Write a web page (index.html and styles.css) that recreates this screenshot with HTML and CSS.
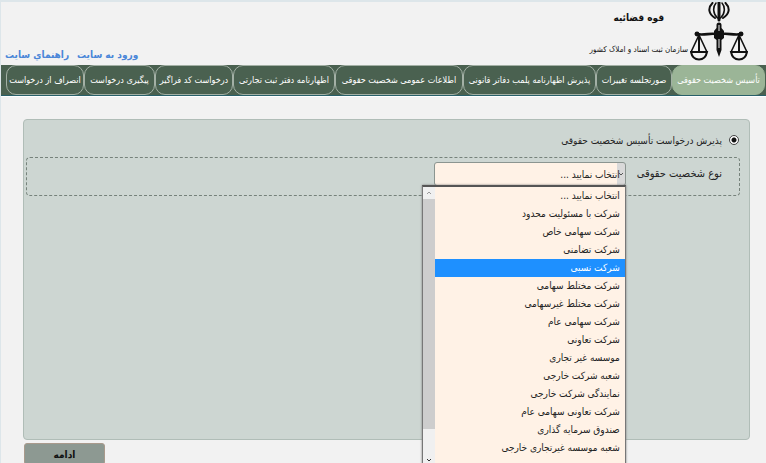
FILE: index.html
```
<!DOCTYPE html>
<html lang="fa" dir="rtl">
  <head>
    <meta charset="UTF-8" />
    <meta name="viewport" content="width=device-width, initial-scale=1.0" />
    <title>سازمان ثبت اسناد و املاک کشور</title>
    <link rel="stylesheet" href="styles.css">
  </head>
  <body>
    <header class="header">
      <div class="brand">
        <svg class="emblem" viewBox="0 2 58 60" width="58" height="60" aria-hidden="true">
          <g fill="none" stroke="#111" stroke-linecap="round">
            <path d="M22.500 3C17.500 8 18.500 14 25 18M35.500 3C40.500 8 39.500 14 33 18" stroke-width="2" />
            <path d="M26 3C22.500 7 23 14 27.500 18M32 3C35.500 7 35 14 30.500 18" stroke-width="1.600" />
            <path d="M29 2V20" stroke-width="3" />
            <path d="M6 34C14 35.500 20 33 26 34H32C38 33 44 35.500 52 34" stroke-width="2.600" />
            <path d="M9 34V52M49 34V52" stroke-width="2" />
            <path d="M9 35L1.500 51M9 35L16.500 51M49 35L41.500 51M49 35L56.500 51" stroke-width="1.600" />
            <path d="M1 52H17C15 62 3 62 1 52ZM41 52H57C55 62 43 62 41 52Z" stroke-width="2" />
          </g>
          <path d="M26.500 28V25A2.500 2.500 0 0 1 31.500 25V28L34 31V38L31.500 40V50L29 57L26.500 50V40L24 38V31Z" fill="#111" />
          <path d="M29 25V31M29 39V48" stroke="#f2f2f2" stroke-width="1" />
          <circle cx="7" cy="34" r="2.400" fill="#111" />
          <circle cx="51" cy="34" r="2.400" fill="#111" />
        </svg>
        <div class="brand-text">
          <span class="brand-top">قوه قضائیه</span>
          <span class="brand-name">سازمان ثبت اسناد و املاک کشور</span>
        </div>
      </div>
      <div class="links">
        <a href="#">ورود به سایت</a>
        <a href="#">راهنماي سایت</a>
      </div>
    </header>

    <nav class="tabs">
      <a href="#" class="tab active">تأسیس شخصیت حقوقی</a>
      <a href="#" class="tab">صورتجلسه تغییرات</a>
      <a href="#" class="tab">پذیرش اظهارنامه پلمب دفاتر قانونی</a>
      <a href="#" class="tab">اطلاعات عمومی شخصیت حقوقی</a>
      <a href="#" class="tab">اظهارنامه دفتر ثبت تجارتی</a>
      <a href="#" class="tab">درخواست کد فراگیر</a>
      <a href="#" class="tab">پیگیری درخواست</a>
      <a href="#" class="tab">انصراف از درخواست</a>
    </nav>

    <form class="content">
      <div class="panel">
        <div class="choice">
          <input type="radio" id="request" name="request" class="radio" checked />
          <label for="request">پذیرش درخواست تأسیس شخصیت حقوقی</label>
        </div>
        <div class="field">
          <label for="type" class="field-label">نوع شخصیت حقوقی</label>
          <div class="dropdown">
            <select id="type" class="select">
              <option>انتخاب نمایید ...</option>
            </select>
            <svg class="arrow" viewBox="0 0 8 8" width="8" height="8" aria-hidden="true"><path d="M2 3L4 5L6 3" fill="none" stroke="#555" /></svg>
            <div class="menu">
              <ul class="options" role="listbox" aria-label="نوع شخصیت حقوقی">
                <li role="option">انتخاب نمایید ...</li>
                <li role="option">شرکت با مسئولیت محدود</li>
                <li role="option">شرکت سهامی خاص</li>
                <li role="option">شرکت تضامنی</li>
                <li role="option" class="selected" aria-selected="true">شرکت نسبی</li>
                <li role="option">شرکت مختلط سهامی</li>
                <li role="option">شرکت مختلط غیرسهامی</li>
                <li role="option">شرکت سهامی عام</li>
                <li role="option">شرکت تعاونی</li>
                <li role="option">موسسه غیر تجاری</li>
                <li role="option">شعبه شرکت خارجی</li>
                <li role="option">نمایندگی شرکت خارجی</li>
                <li role="option">شرکت تعاونی سهامی عام</li>
                <li role="option">صندوق سرمایه گذاری</li>
                <li role="option">شعبه موسسه غیرتجاری خارجی</li>
              </ul>
              <div class="scrollbar">
                <svg viewBox="0 0 12 12" width="12" height="12"><path d="M4 7L6 5L8 7" fill="none" stroke="#999" /></svg>
                <div class="thumb"></div>
                <svg viewBox="0 0 12 12" width="12" height="12"><path d="M4 5L6 7L8 5" fill="none" stroke="#333" /></svg>
              </div>
            </div>
          </div>
        </div>
      </div>
      <button type="button" class="next">ادامه</button>
    </form>
  </body>
</html>
```
FILE: styles.css
```
* {
  box-sizing: border-box;
}
html {
  overflow: hidden;
}
body {
  margin: 0;
  background: #f2f2f2;
  border-top: 2px solid #dde6ea;
  border-left: 1px solid #dde6ea;
  font-family: "DejaVu Sans Condensed", "DejaVu Sans", sans-serif;
  font-size: 10px;
  color: #222;
}
.header {
  display: flex;
  justify-content: space-between;
  align-items: flex-end;
  height: 63px;
  padding: 0 18px 0 4px;
}
.brand {
  display: flex;
  align-self: flex-start;
  gap: 2px;
}
.emblem {
  display: block;
}
.brand-text {
  display: flex;
  flex-direction: column;
  align-items: center;
  gap: 12px;
  padding-top: 6px;
  color: #111;
  line-height: 20px;
  white-space: nowrap;
}
.brand-top {
  font-size: 10px;
  font-weight: bold;
}
.brand-name {
  font-size: 8px;
}
.links {
  display: flex;
  gap: 8px;
}
.links a {
  color: #4a86d8;
  font-weight: bold;
  line-height: 20px;
  text-decoration: none;
}
.tabs {
  display: grid;
  grid-template-columns: 93fr 76fr 133fr 128fr 102fr 78fr 71fr 78fr;
  height: 31px;
  padding: 0 1px 0 5px;
  background: #4a6150;
  border-bottom: 1px solid #28606a;
  box-shadow: 0 1px 0 #fff;
}
.tab {
  display: flex;
  align-items: center;
  justify-content: center;
  min-width: 0;
  border: 1px solid #a3b0a5;
  border-radius: 10px;
  color: #fff;
  font-size: 9px;
  text-decoration: none;
  white-space: nowrap;
}
.tab.active {
  background: #9bb597;
  border-color: #9bb597;
}
.content {
  padding: 23px 16px 0 22px;
}
.panel {
  height: 321px;
  padding: 10px 9px 0 2px;
  background: #cdd6d2;
  border: 1px solid #b0bdb7;
  border-radius: 4px;
}
.choice {
  display: flex;
  align-items: center;
  gap: 7px;
  height: 20px;
  padding-right: 1px;
}
.radio {
  appearance: none;
  width: 10px;
  height: 10px;
  margin: 0;
  border: 1px solid #444;
  border-radius: 50%;
  background: radial-gradient(circle, #111 2px, #fff 3px);
}
.field {
  display: flex;
  align-items: flex-start;
  gap: 11px;
  height: 39px;
  margin-top: 7px;
  padding: 4px 17px 0 0;
  border: 1px dashed #76827b;
  border-radius: 4px;
}
.field-label {
  font-size: 11px;
  line-height: 24px;
}
.dropdown {
  position: relative;
  width: 192px;
}
.select {
  appearance: none;
  display: block;
  width: 100%;
  height: 24px;
  padding: 0 5px;
  border: 1px solid #8b9590;
  border-radius: 3px;
  background: linear-gradient(to left, #d9d9d9 8px, #fff2e6 8px);
  color: #222;
  font-family: inherit;
  font-size: 10px;
}
.arrow {
  position: absolute;
  top: 8px;
  right: 1px;
  pointer-events: none;
}
.menu {
  position: absolute;
  top: 23px;
  right: 0;
  display: flex;
  width: 204px;
  height: 282px;
  border: 1px solid #777;
  border-top: 2px solid #555;
  background: #fff2e6;
  box-shadow: 0 0 2px #777;
}
.options {
  flex: 1;
  margin: 0;
  padding: 0;
  list-style: none;
}
.options li {
  height: 18px;
  padding-right: 5px;
  line-height: 18px;
}
.options .selected {
  background: #1e90ff;
  color: #fff;
}
.scrollbar {
  display: flex;
  flex-direction: column;
  justify-content: space-between;
  width: 12px;
  background: #f0f0f0;
}
.thumb {
  height: 230px;
  margin-bottom: auto;
  background: #cdcdcd;
}
.next {
  display: block;
  width: 81px;
  height: 22px;
  margin: 3px auto 0 1px;
  border: 1px solid #a99a8c;
  border-radius: 3px;
  background: #8d9992;
  color: #111;
  font-family: inherit;
  font-size: 10px;
  font-weight: bold;
}
```
